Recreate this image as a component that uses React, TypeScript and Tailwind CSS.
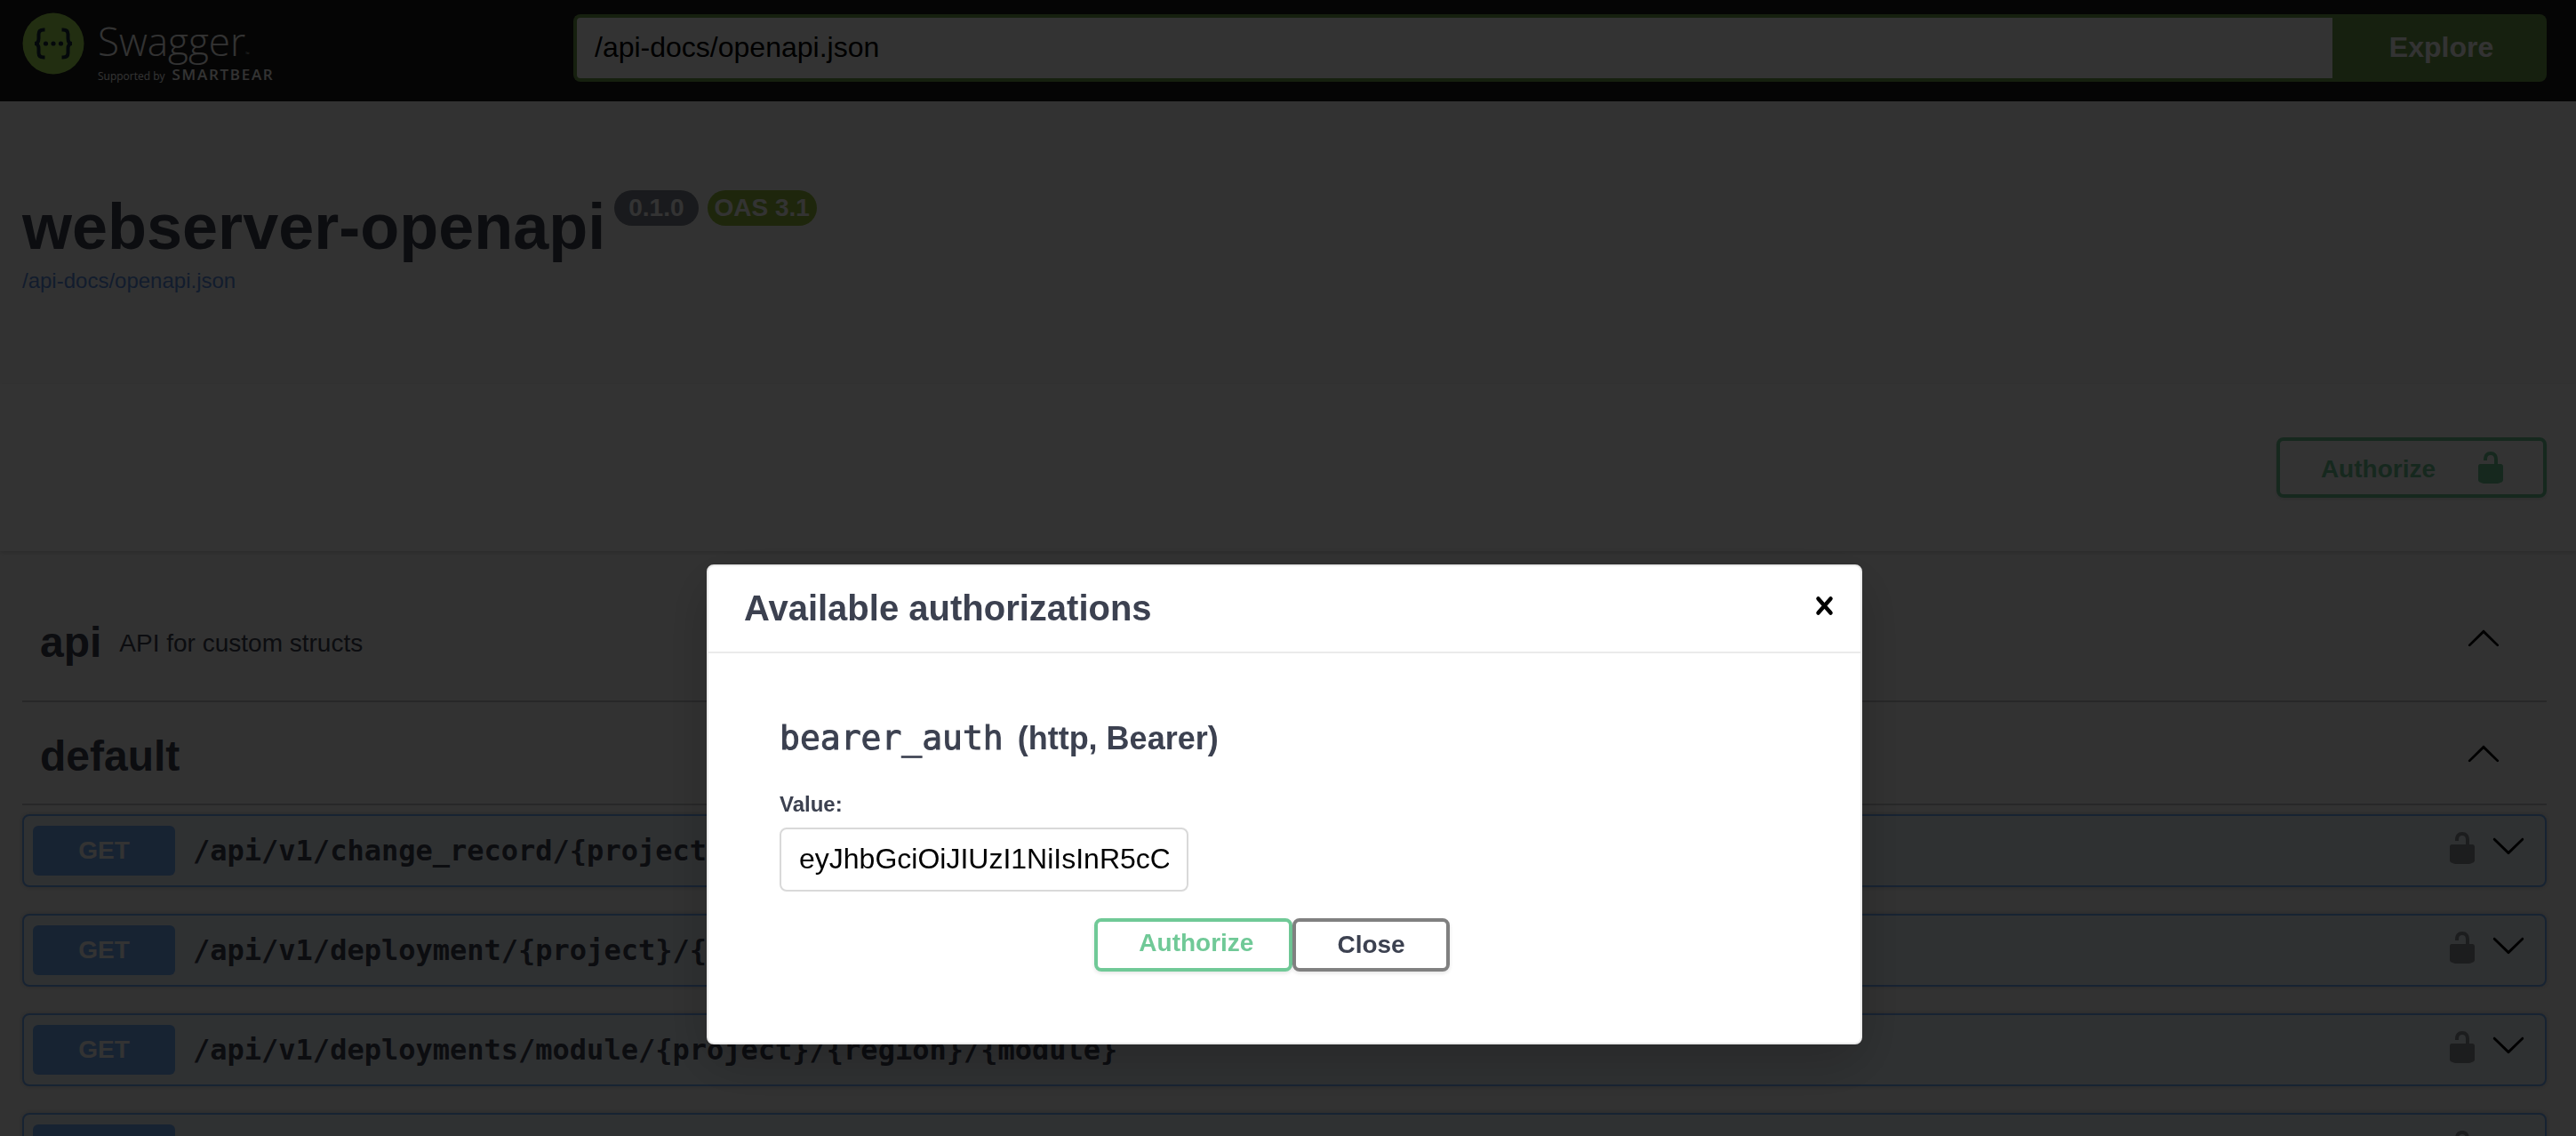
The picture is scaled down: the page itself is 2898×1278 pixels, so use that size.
import { useState } from "react";

const operations = [
  "/api/v1/change_record/{project}/{region}/{environment}",
  "/api/v1/deployment/{project}/{region}/{environment}",
  "/api/v1/deployments/module/{project}/{region}/{module}",
  "/api/v1/deployments/{project}/{region}",
];

function UnlockedIcon({ className }: { className: string }) {
  return (
    <svg viewBox="0 0 20 20" fill="currentColor" aria-hidden="true" className={className}>
      <path d="M15.8 8H14V5.6C14 2.703 12.665 1 10 1 7.334 1 6 2.703 6 5.6V6h2v-.801C8 3.754 8.797 3 10 3c1.203 0 2 .754 2 2.199V8H4c-.553 0-1 .646-1 1.199V17c0 .549.428 1.139.951 1.307l1.197.387C5.672 18.861 6.55 19 7.1 19h5.8c.549 0 1.428-.139 1.951-.307l1.196-.387c.524-.167.953-.757.953-1.306V9.199C17 8.646 16.352 8 15.8 8z" />
    </svg>
  );
}

function ArrowIcon({ up = false }: { up?: boolean }) {
  return (
    <svg viewBox="0 0 20 20" fill="currentColor" aria-hidden="true" className="size-10 text-black">
      {up ? (
        <path d="M17.418 14.908c.272.268.709.268.979 0s.271-.701 0-.969l-7.908-7.83c-.27-.268-.707-.268-.979 0l-7.908 7.83c-.27.268-.27.701 0 .969.271.268.709.267.979 0L10 7.767l7.418 7.141z" />
      ) : (
        <path d="M17.418 6.109c.272-.268.709-.268.979 0s.271.701 0 .969l-7.908 7.83c-.27.268-.707.268-.979 0l-7.908-7.83c-.27-.268-.27-.701 0-.969.271-.268.709-.268.979 0L10 13.25l7.418-7.141z" />
      )}
    </svg>
  );
}

function Logo() {
  return (
    <a href="#" aria-label="Swagger" className="flex w-[620px] shrink-0 items-start gap-[15px] text-white">
      <svg viewBox="0 0 70 70" aria-hidden="true" className="size-[70px]">
        <circle cx="35" cy="35" r="34.5" fill="#a8e658" />
        <g fill="none" stroke="#172b3a" strokeWidth="4">
          <path d="M25.5 19.5h-1.5c-4 0-5.5 2-5.5 5v4.5c0 3.5-1 6-4.5 6 3.5 0 4.5 2.5 4.5 6v4.5c0 3 1.5 5 5.5 5h1.5" />
          <path d="M44.5 19.5h1.5c4 0 5.5 2 5.5 5v4.5c0 3.5 1 6 4.5 6-3.5 0-4.5 2.5-4.5 6v4.5c0 3-1.5 5-5.5 5h-1.5" />
        </g>
        <g fill="#172b3a">
          <circle cx="26.5" cy="35" r="2.6" />
          <circle cx="35" cy="35" r="2.6" />
          <circle cx="43.5" cy="35" r="2.6" />
        </g>
      </svg>
      <span className="flex flex-col gap-1 pt-2 font-['Open_Sans',sans-serif]">
        <span className="flex items-baseline text-[44px] leading-[48px] font-light">
          Swagger<span className="text-[6px] leading-none">™</span>
        </span>
        <span className="flex items-baseline gap-2 text-[12px] leading-5">
          Supported by <span className="text-[17px] leading-5 font-semibold tracking-widest">SMARTBEAR</span>
        </span>
      </span>
    </a>
  );
}

function TopBar() {
  const [url, setUrl] = useState("/api-docs/openapi.json");
  return (
    <header className="flex h-[114px] items-start bg-[#1b1b1b] pt-[14px] pr-[33px] pl-[25px]">
      <Logo />
      <form className="mt-[2px] flex min-w-0 grow" onSubmit={(e) => e.preventDefault()}>
        <input
          type="text"
          aria-label="Definition URL"
          value={url}
          onChange={(e) => setUrl(e.target.value)}
          className="h-[76px] min-w-0 grow rounded-l-lg border-4 border-r-0 border-[#709f4c] bg-white px-5 pb-[2px] text-[32px] text-black outline-none"
        />
        <button type="submit" className="w-[241px] rounded-r-lg bg-[#709f4c] pb-[2px] pl-1 text-[32px] font-bold text-white">
          Explore
        </button>
      </form>
    </header>
  );
}

function TagHeader({ name, description }: { name: string; description?: string }) {
  return (
    <div className="flex items-center border-b-2 border-[#c3c4c8] pr-[51px] pl-5">
      {description ? (
        <h2 className="flex grow items-center gap-5 pt-3 text-5xl leading-[130px] font-bold">
          {name}
          <small className="pt-[2px] text-[28px] leading-[128px] font-normal">{description}</small>
        </h2>
      ) : (
        <h2 className="grow pt-2 text-5xl leading-[106px] font-bold">{name}</h2>
      )}
      <button type="button" aria-label={`Collapse ${name}`}>
        <ArrowIcon up />
      </button>
    </div>
  );
}

function Operation({ path }: { path: string }) {
  return (
    <div className="flex items-center rounded-lg border-2 border-[#74adf7] bg-[#ebf2fa] px-[10px] py-[11px] shadow-[0_0_6px_rgba(0,0,0,0.19)]">
      <span className="w-40 shrink-0 rounded-md bg-[#74adf7] text-center text-[28px] leading-[56px] font-bold text-white">GET</span>
      <a href="#" className="min-w-0 grow truncate pl-5 font-['DejaVu_Sans_Mono',monospace] text-[32px] leading-[56px] font-bold">
        {path}
      </a>
      <button type="button" aria-label={`Authorize ${path}`} className="mb-[6px] px-3">
        <UnlockedIcon className="size-10 text-black opacity-40" />
      </button>
      <button type="button" aria-label={`Expand ${path}`} className="mr-[11px] mb-3">
        <ArrowIcon />
      </button>
    </div>
  );
}

function AuthorizeModal() {
  const [token, setToken] = useState("eyJhbGciOiJIUzI1NiIsInR5cC");
  return (
    <div className="fixed inset-0 flex items-start justify-center overflow-hidden bg-black/80 pt-[635px] pr-2">
      <div
        role="dialog"
        aria-modal="true"
        aria-labelledby="auth-title"
        className="w-[1300px] rounded-lg border-2 border-[#ebebeb] bg-white shadow-[0_20px_60px_rgba(0,0,0,0.2)]"
      >
        <div className="flex items-center justify-between border-b-2 border-[#ebebeb] pr-5 pl-10">
          <h3 id="auth-title" className="pb-[2px] text-[40px] leading-[94px] font-bold">
            Available authorizations
          </h3>
          <button type="button" aria-label="Close dialog" className="mb-2">
            <svg viewBox="0 0 40 40" aria-hidden="true" className="size-10" fill="none" stroke="#000" strokeWidth="4.5" strokeLinecap="round">
              <path d="M12.5 12.5l14 16M26.5 12.5l-14 16" />
            </svg>
          </button>
        </div>
        <form className="px-20 pt-[72px] pb-20" onSubmit={(e) => e.preventDefault()}>
          <h4 className="flex h-12 items-baseline gap-4 text-[36px] leading-[48px] font-bold">
            <code className="font-['DejaVu_Sans_Mono',monospace] text-[38px] leading-none font-normal [-webkit-text-stroke:1px_#3c4150]">
              bearer_auth
            </code>
            (http, Bearer)
          </h4>
          <label htmlFor="token" className="mt-[35px] block pb-1 text-2xl leading-[30px] font-bold">
            Value:
          </label>
          <input
            id="token"
            type="text"
            value={token}
            onChange={(e) => setToken(e.target.value)}
            className="mt-[7px] block h-[72px] w-[460px] rounded-lg border-2 border-[#d9d9d9] bg-white px-5 pb-[2px] text-[32px] text-black outline-none"
          />
          <div className="mt-[30px] flex justify-center pr-7 text-[28px] font-bold">
            <button type="submit" className="h-[60px] rounded-lg border-4 border-[#70c997] pr-10 pb-1 pl-[46px] text-[#70c997] shadow-[0_2px_4px_rgba(0,0,0,0.1)]">
              Authorize
            </button>
            <button type="button" className="h-[60px] rounded-lg border-4 border-[#808080] px-[46px] shadow-[0_2px_4px_rgba(0,0,0,0.1)]">
              Close
            </button>
          </div>
        </form>
      </div>
    </div>
  );
}

export default function App() {
  return (
    <div className="h-screen overflow-hidden bg-[#fafafa] font-['Liberation_Sans',Arial,sans-serif] text-[#3c4150]">
      <TopBar />
      <main>
        <section className="pt-[100px] pr-[33px] pb-[100px] pl-[25px]">
          <h1 className="flex items-start gap-[10px] text-[72px] leading-[82px] font-bold">
            webserver-openapi
            <span className="rounded-full bg-[#7f848f] px-4 text-[28px] leading-10 text-white">0.1.0</span>
            <span className="rounded-full bg-[#96be3c] px-2 text-[28px] leading-10 text-white">OAS 3.1</span>
          </h1>
          <a href="#" className="mt-1 block text-2xl leading-8 text-[#5b8ee0]">
            /api-docs/openapi.json
          </a>
        </section>
        <section className="flex justify-end bg-white py-[60px] pr-[33px] shadow-[0_2px_4px_rgba(0,0,0,0.15)]">
          <button
            type="button"
            className="flex h-[68px] items-center gap-[42px] rounded-lg border-4 border-[#70c997] pr-[39px] pl-[46px] text-[28px] font-bold text-[#70c997] shadow-[0_2px_4px_rgba(0,0,0,0.1)]"
          >
            <span className="pt-1">Authorize</span>
            <UnlockedIcon className="size-10" />
          </button>
        </section>
        <section className="pt-[26px] pr-[33px] pl-[25px]">
          <TagHeader name="api" description="API for custom structs" />
          <TagHeader name="default" />
          <div className="mt-[10px] flex flex-col gap-[30px]">
            {operations.map((path) => (
              <Operation key={path} path={path} />
            ))}
          </div>
        </section>
      </main>
      <AuthorizeModal />
    </div>
  );
}
